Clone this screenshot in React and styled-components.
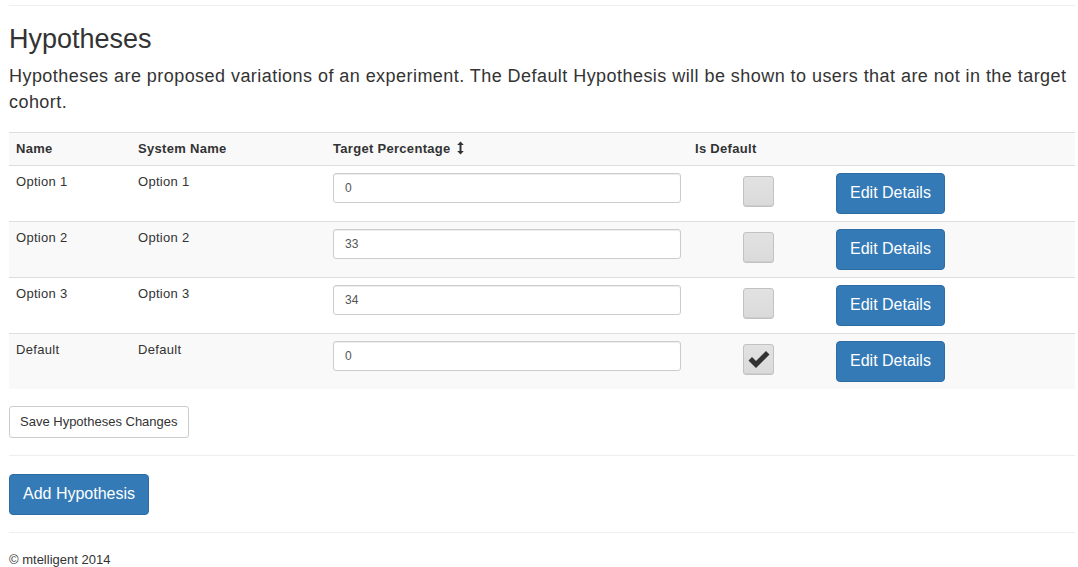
import React from 'react';
import styled, { createGlobalStyle } from 'styled-components';

const GlobalStyle = createGlobalStyle`
  html, body {
    margin: 0;
    padding: 0;
    background: #fff;
  }
  body {
    font-family: 'Liberation Sans', Arial, sans-serif;
    font-size: 13px;
    color: #333;
  }
`;

const hypotheses = [
  { name: 'Option 1', systemName: 'Option 1', percentage: '0', isDefault: false },
  { name: 'Option 2', systemName: 'Option 2', percentage: '33', isDefault: false },
  { name: 'Option 3', systemName: 'Option 3', percentage: '34', isDefault: false },
  { name: 'Default', systemName: 'Default', percentage: '0', isDefault: true },
];

const SortIcon = () => (
  <svg width="7" height="14" viewBox="0 0 7 14" style={{ marginLeft: 6, verticalAlign: -2 }}>
    <path d="M3.5 0.5 L6.8 4 H4.5 V10 H6.8 L3.5 13.5 L0.2 10 H2.5 V4 H0.2 Z" fill="#333" />
  </svg>
);

const CheckIcon = () => (
  <svg width="22" height="19" viewBox="0 0 22 19">
    <path d="M0.5 10.5 L4 7 L8 11 L18 1 L21.5 4.5 L8 18 Z" fill="#333" />
  </svg>
);

const App = () => {
  return (
    <Page>
      <GlobalStyle />
      <Rule />
      <Title>Hypotheses</Title>
      <Lead>
        Hypotheses are proposed variations of an experiment. The Default Hypothesis will be shown to users
        that are not in the target cohort.
      </Lead>
      <Table>
        <colgroup>
          <col style={{ width: 122 }} />
          <col style={{ width: 195 }} />
          <col style={{ width: 362 }} />
          <col style={{ width: 141 }} />
          <col />
        </colgroup>
        <thead>
          <Row $striped>
            <HeadCell>Name</HeadCell>
            <HeadCell>System Name</HeadCell>
            <HeadCell>
              Target Percentage
              <SortIcon />
            </HeadCell>
            <HeadCell>Is Default</HeadCell>
            <HeadCell />
          </Row>
        </thead>
        <tbody>
          {hypotheses.map((h, i) => (
            <Row key={h.name} $striped={i % 2 === 1}>
              <Cell>{h.name}</Cell>
              <Cell>{h.systemName}</Cell>
              <Cell>
                <PercentInput defaultValue={h.percentage} />
              </Cell>
              <CheckCell>
                <CheckBox>{h.isDefault && <CheckIcon />}</CheckBox>
              </CheckCell>
              <Cell>
                <PrimaryButton>Edit Details</PrimaryButton>
              </Cell>
            </Row>
          ))}
        </tbody>
      </Table>
      <SaveButton>Save Hypotheses Changes</SaveButton>
      <Rule $gap />
      <PrimaryButton>Add Hypothesis</PrimaryButton>
      <Rule $gap />
      <Footer>© mtelligent 2014</Footer>
    </Page>
  );
};

const Page = styled.div`
  padding: 5px 3px 0 9px;
`;

const Rule = styled.hr`
  border: 0;
  border-top: 1px solid #eee;
  margin: ${(props) => (props.$gap ? '17px 0 18px' : '0')};
`;

const Title = styled.h2`
  font-size: 27px;
  font-weight: normal;
  line-height: 1.1;
  margin: 19px 0 8px;
`;

const Lead = styled.p`
  font-size: 18px;
  line-height: 26px;
  letter-spacing: 0.45px;
  margin: 0 0 17px;
`;

const Table = styled.table`
  width: 100%;
  border-collapse: collapse;
  table-layout: fixed;
  margin-bottom: 17px;
`;

const Row = styled.tr`
  background: ${(props) => (props.$striped ? '#f9f9f9' : '#fff')};
  border-top: 1px solid #ddd;
`;

const HeadCell = styled.th`
  text-align: left;
  font-weight: bold;
  font-size: 13px;
  line-height: 18px;
  letter-spacing: 0.3px;
  padding: 7px 7px;
  border-bottom: 1px solid #ddd;
  white-space: nowrap;
`;

const Cell = styled.td`
  vertical-align: top;
  font-size: 13px;
  line-height: 18px;
  letter-spacing: 0.3px;
  padding: 7px 7px;
`;

const CheckCell = styled(Cell)`
  text-align: center;
  padding-top: 10px;
`;

const PercentInput = styled.input`
  box-sizing: border-box;
  width: 348px;
  height: 30px;
  padding: 5px 11px;
  font-family: inherit;
  font-size: 12px;
  color: #555;
  border: 1px solid #ccc;
  border-radius: 3px;
  box-shadow: inset 0 1px 1px rgba(0, 0, 0, 0.075);
  outline: none;
`;

const CheckBox = styled.span`
  box-sizing: border-box;
  display: inline-flex;
  align-items: center;
  justify-content: center;
  width: 31px;
  height: 31px;
  border: 1px solid #c2c2c2;
  border-radius: 3px;
  background: linear-gradient(#e2e2e2, #dadada);
  box-shadow: inset 0 -1px 0 rgba(0, 0, 0, 0.06);
  vertical-align: top;
`;

const PrimaryButton = styled.button`
  display: inline-block;
  height: 41px;
  padding: 0 13px;
  font-family: inherit;
  font-size: 16px;
  color: #fff;
  background: #337ab7;
  border: 1px solid #2e6da4;
  border-radius: 4px;
  cursor: pointer;
`;

const SaveButton = styled.button`
  display: block;
  height: 32px;
  padding: 0 10px;
  font-family: inherit;
  font-size: 13px;
  color: #333;
  background: #fff;
  border: 1px solid #ccc;
  border-radius: 3px;
  cursor: pointer;
`;

const Footer = styled.p`
  margin: 18px 0 0;
  font-size: 13px;
  line-height: 18px;
`;

export default App;
